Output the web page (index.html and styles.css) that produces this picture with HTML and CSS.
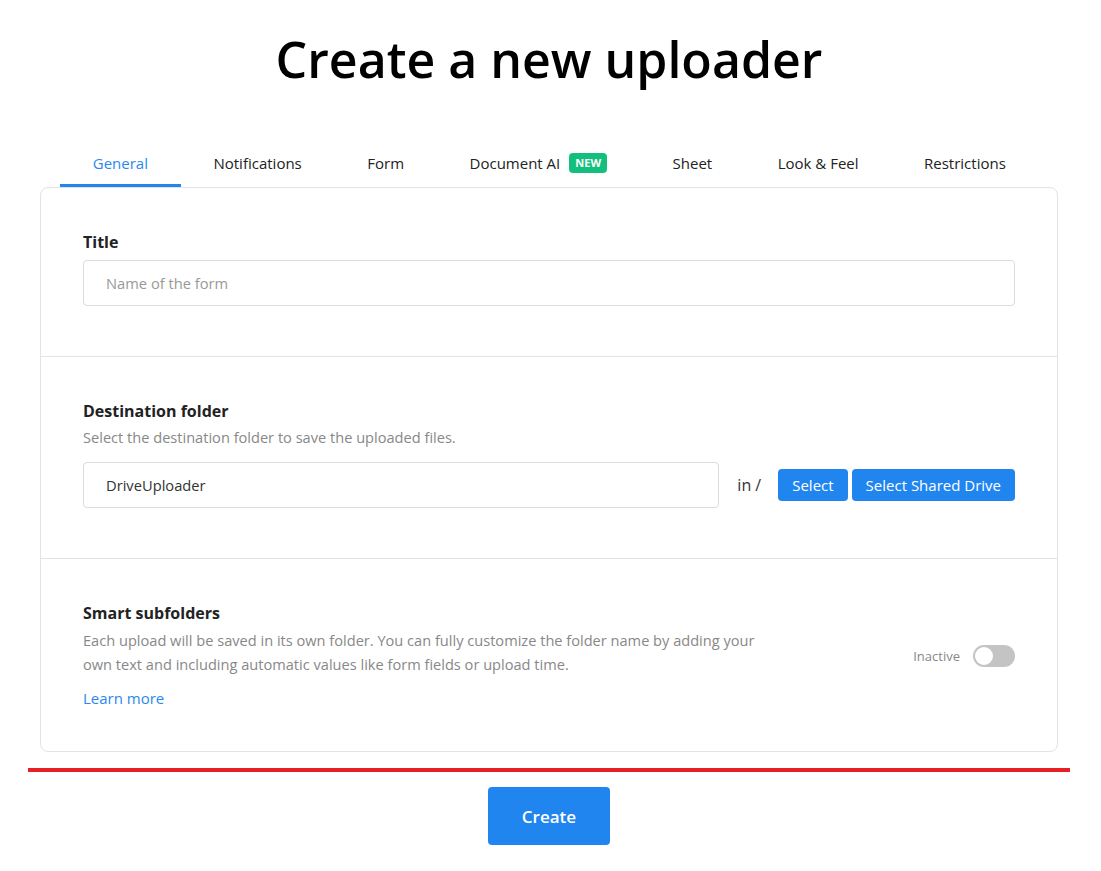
FILE: index.html
```html
<!DOCTYPE html>
<html lang="en">
<head>
  <meta charset="UTF-8" />
  <meta name="viewport" content="width=device-width, initial-scale=1.0"/>
  <title>Create a new uploader</title>
  <link rel="stylesheet" href="styles.css">
</head>
<body>
  <div class="page">
    <h1 class="page-title">Create a new uploader</h1>

    <!-- TABS -->
    <div class="tabs">
      <div class="tab active">General</div>
      <div class="tab">Notifications</div>
      <div class="tab">Form</div>
      <div class="tab">Document AI <span class="badge">NEW</span></div>
      <div class="tab">Sheet</div>
      <div class="tab">Look &amp; Feel</div>
      <div class="tab">Restrictions</div>
    </div>

    <div class="card">
      <!-- Title -->
      <div class="section">
        <div class="label">Title</div>
        <input class="field" type="text" placeholder="Name of the form">
      </div>

      <!-- Destination folder -->
      <div class="section">
        <div class="label">Destination folder</div>
        <div class="hint">Select the destination folder to save the uploaded files.</div>
        <div class="folder-row">
          <input class="field folder-field" type="text" value="DriveUploader">
          <span class="folder-in">in /</span>
          <button class="btn-small">Select</button>
          <button class="btn-small">Select Shared Drive</button>
        </div>
      </div>

      <!-- Smart subfolders -->
      <div class="section section-split">
        <div class="split-text">
          <div class="label">Smart subfolders</div>
          <div class="hint hint-long">Each upload will be saved in its own folder. You can fully customize the folder name by adding your own text and including automatic values like form fields or upload time.</div>
          <a class="learn-more" href="#">Learn more</a>
        </div>
        <div class="switch-wrap">
          <span class="switch-label">Inactive</span>
          <span class="switch"><span class="knob"></span></span>
        </div>
      </div>
    </div>

    <div class="divider"></div>

    <div class="actions">
      <button class="btn-create">Create</button>
    </div>
  </div>
</body>
</html>
```

FILE: styles.css
```css
html, body {
  margin: 0;
  padding: 0;
  background: #fff;
  font-family: "Open Sans", Arial, sans-serif;
  color: #222;
}

.page {
  margin: 0 31px 0 28px;
}

.page-title {
  margin: 28px 0 0;
  font-size: 50px;
  line-height: 62px;
  font-weight: 600;
  text-align: center;
  color: #000;
}

/* TABS */
.tabs {
  display: flex;
  margin: 50px 12px 0;
  padding-left: 20px;
}

.tab {
  padding: 12px 32.75px 10px;
  font-size: 15px;
  line-height: 22px;
  color: #222;
  border-bottom: 3px solid transparent;
  display: flex;
  align-items: center;
  white-space: nowrap;
}

.tab.active {
  color: #2a88f0;
  border-bottom-color: #2185f0;
}

.badge {
  margin-left: 9px;
  padding: 0 6px;
  height: 20px;
  line-height: 20px;
  font-size: 11px;
  font-weight: 700;
  color: #fff;
  background: #13bf7d;
  border-radius: 4px;
}

/* CARD */
.card {
  margin: 0 12px;
  border: 1px solid #e3e3e3;
  border-radius: 8px;
}

.section {
  padding: 43px 42px 50px 42px;
  border-top: 1px solid #e3e3e3;
}

.section:first-child {
  border-top: none;
}

.label {
  font-size: 16px;
  line-height: 22px;
  font-weight: 700;
  color: #222;
  margin-bottom: 7px;
}

.hint {
  font-size: 14.6px;
  line-height: 22px;
  color: #888;
  margin-top: -3px;
}

.field {
  display: block;
  box-sizing: border-box;
  width: 100%;
  height: 46px;
  padding: 0 22px;
  border: 1px solid #dcdcdc;
  border-radius: 4px;
  font-family: inherit;
  font-size: 14.7px;
  color: #333;
  outline: none;
}

.field::placeholder {
  color: #999;
}

.folder-row {
  display: flex;
  align-items: center;
  margin-top: 14px;
}

.folder-field {
  flex: 1;
  min-width: 0;
}

.folder-in {
  margin: 0 17px 0 18px;
  font-size: 16px;
  color: #333;
  white-space: nowrap;
}

.btn-small {
  flex-shrink: 0;
  height: 32px;
  padding: 0 14px;
  margin-right: 4px;
  border: none;
  border-radius: 4px;
  background: #2185f0;
  color: #fff;
  font-family: inherit;
  font-size: 15px;
  font-weight: 500;
  white-space: nowrap;
  cursor: pointer;
}

.btn-small:last-child {
  margin-right: 0;
}

/* SMART SUBFOLDERS */
.section-split {
  display: flex;
  align-items: center;
  justify-content: space-between;
  padding-bottom: 42px;
}

.hint-long {
  max-width: 680px;
  line-height: 24px;
}

.learn-more {
  display: block;
  margin-top: 11px;
  font-size: 15px;
  line-height: 22px;
  color: #2a88f0;
  text-decoration: none;
}

.switch-wrap {
  display: flex;
  align-items: center;
  gap: 13px;
}

.switch-label {
  font-size: 13px;
  color: #888;
}

.switch {
  position: relative;
  width: 42px;
  height: 22px;
  border-radius: 11px;
  background: #c4c4c4;
}

.knob {
  position: absolute;
  top: 2px;
  left: 2px;
  width: 18px;
  height: 18px;
  border-radius: 50%;
  background: #fff;
}

.divider {
  height: 4px;
  margin-top: 16px;
  background: #e62025;
}

.actions {
  display: flex;
  justify-content: center;
  margin-top: 15px;
}

.btn-create {
  width: 122px;
  height: 58px;
  border: none;
  border-radius: 4px;
  background: #2185f0;
  color: #fff;
  font-family: inherit;
  font-size: 17px;
  font-weight: 600;
  cursor: pointer;
}
```
